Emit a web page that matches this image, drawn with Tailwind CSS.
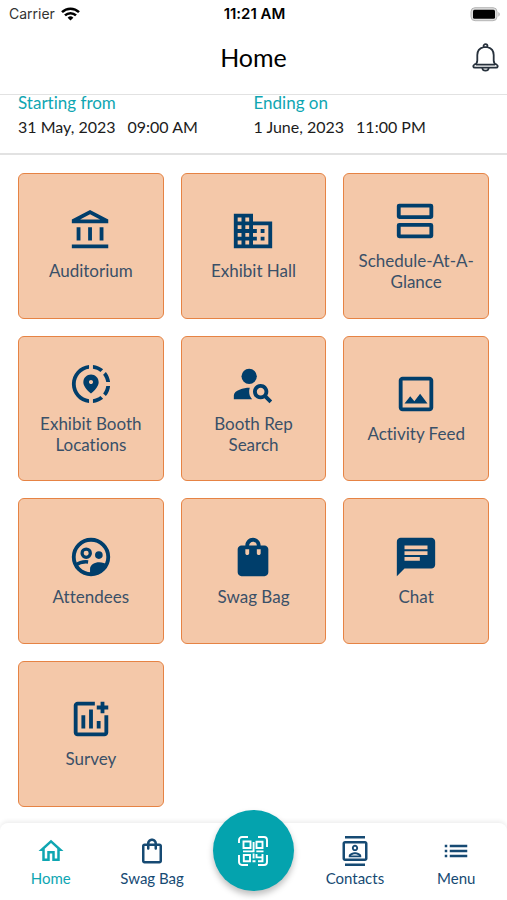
<!DOCTYPE html>
<html lang="en">
<head>
  <meta charset="UTF-8">
  <meta name="viewport" content="width=device-width, initial-scale=1.0">
  <title>Home</title>
  <script src="https://cdn.jsdelivr.net/npm/@tailwindcss/browser@4"></script>
</head>
<body class="min-h-screen flex flex-col bg-white text-[#1c1c1c] font-['Lato',sans-serif] [font-variant-ligatures:none]">

  <!-- Status bar -->
  <div class="grid grid-cols-3 items-center h-7 pl-[9px] pr-[7px] font-['Inter',sans-serif] text-sm">
    <div class="flex items-center gap-[6px] text-[#333]">
      <span>Carrier</span>
      <svg class="w-[19px] h-[14px]" viewBox="0 0 19 14" fill="none" stroke="#000" stroke-width="2.5">
        <path d="M1 5.2a12.2 12.2 0 0 1 17 0"/>
        <path d="M4 8.4a7.8 7.8 0 0 1 11 0"/>
        <path d="M9.5 13.6 6.6 10.7a4.1 4.1 0 0 1 5.8 0z" fill="#000" stroke="none"/>
      </svg>
    </div>
    <div class="text-center text-[15px] font-semibold text-black">11:21 AM</div>
    <svg class="justify-self-end w-[30px] h-[15px]" viewBox="0 0 30 15">
      <rect x="1" y="0.7" width="26" height="13" rx="4" fill="#ddd" stroke="#b5b5b5"/>
      <rect x="3" y="2.700" width="22" height="9" rx="1.500" fill="#000"/>
      <path d="M28.300 5c2 .8 2 3.800 0 4.600z" fill="#b5b5b5"/>
    </svg>
  </div>

  <!-- Header -->
  <header class="grid grid-cols-[1fr_auto_1fr] items-center h-[67px] pb-2 px-2 border-b border-[#e2e2e2]">
    <h1 class="col-start-2 text-[25px] leading-8 text-black">Home</h1>
    <button class="justify-self-end" aria-label="Notifications">
      <svg class="w-[27px] h-[30px]" viewBox="0 0 27 30" fill="none" stroke="#27313c" stroke-width="1.800" stroke-linejoin="round">
        <path d="M11.500 5.200V4.200a2 2 0 0 1 4 0v1c3.800 1 6.200 3.900 6.200 7.900v5.400c0 2.400 1 3.500 3 4.200 1.600.8 1.300 3-.6 3H2.900c-1.900 0-2.200-2.200-.6-3 2-.7 3-1.800 3-4.200v-5.400c0-4 2.400-6.900 6.200-7.900z"/>
        <path d="M11.200 5.200h4.600M10.300 26c.4 3.600 6 3.600 6.400 0M4 22.700h19"/>
      </svg>
    </button>
  </header>

  <!-- Event dates -->
  <section class="grid grid-cols-2 h-[60px] px-[18px] border-b-2 border-[#e2e2e2] text-base leading-6">
    <div class="-mt-1">
      <h2 class="text-[17px] leading-6 text-[#0fa6b2]">Starting from</h2>
      <p class="flex gap-3"><span>31 May, 2023</span><span>09:00 AM</span></p>
    </div>
    <div class="-mt-1">
      <h2 class="text-[17px] leading-6 text-[#0fa6b2]">Ending on</h2>
      <p class="flex gap-3"><span>1 June, 2023</span><span>11:00 PM</span></p>
    </div>
  </section>

  <!-- Tiles -->
  <main class="flex-1 grid grid-cols-3 content-start gap-[17px] px-[18px] pt-[18px] pb-4 text-[17px] leading-[21px] text-center text-[#3a5068]">
    <a href="#" class="aspect-square flex flex-col items-center justify-center gap-[6px] pb-[2px] px-2 rounded-md border border-[#e68344] bg-[#f4c8a9]">
      <svg class="w-[46px] h-[46px] fill-[#003e6b]" viewBox="0 0 24 24"><path d="M6.500 10h-2v7h2v-7zm6 0h-2v7h2v-7zm8.500 9H2v2h19v-2zm-2.500-9h-2v7h2v-7zm-7-6.740L16.710 6H6.290l5.210-2.740m0-2.260L2 6v2h19V6l-9.500-5z"/></svg>
      <span>Auditorium</span>
    </a>
    <a href="#" class="aspect-square flex flex-col items-center justify-center gap-[6px] pb-[2px] px-2 rounded-md border border-[#e68344] bg-[#f4c8a9]">
      <svg class="w-[46px] h-[46px] fill-[#003e6b]" viewBox="0 0 24 24"><path d="M12 7V3H2v18h20V7H12zM6 19H4v-2h2v2zm0-4H4v-2h2v2zm0-4H4V9h2v2zm0-4H4V5h2v2zm4 12H8v-2h2v2zm0-4H8v-2h2v2zm0-4H8V9h2v2zm0-4H8V5h2v2zm10 12h-8v-2h2v-2h-2v-2h2v-2h-2V9h8v10zm-2-8h-2v2h2v-2zm0 4h-2v2h2v-2z"/></svg>
      <span>Exhibit Hall</span>
    </a>
    <a href="#" class="aspect-square flex flex-col items-center justify-center gap-[6px] pb-[2px] px-2 rounded-md border border-[#e68344] bg-[#f4c8a9]">
      <svg class="w-[46px] h-[46px] fill-none stroke-[#003e6b]" viewBox="0 0 24 24" stroke-width="2"><rect x="3" y="4" width="17" height="6" rx="0.300"/><rect x="3" y="14" width="17" height="6" rx="0.300"/></svg>
      <span>Schedule-At-A-Glance</span>
    </a>
    <a href="#" class="aspect-square flex flex-col items-center justify-center gap-[6px] pb-[2px] px-2 rounded-md border border-[#e68344] bg-[#f4c8a9]">
      <svg class="w-[46px] h-[46px] fill-[#003e6b]" viewBox="0 0 24 24"><path d="M13.020 19.930v2.020c2.010-.2 3.840-1 5.320-2.210l-1.420-1.430c-1.110.86-2.440 1.440-3.900 1.620zM4.030 12c0-4.050 3.030-7.410 6.950-7.930V2.050C5.950 2.580 2.030 6.840 2.030 12s3.920 9.420 8.950 9.950v-2.020c-3.920-.52-6.950-3.880-6.950-7.930zm15.920-1h2.020c-.2-2.010-1-3.840-2.210-5.320l-1.430 1.430c.86 1.100 1.440 2.430 1.620 3.890zm-1.610-6.740c-1.480-1.210-3.320-2.010-5.320-2.210v2.020c1.460.18 2.790.76 3.900 1.620l1.420-1.430zm-.01 12.640l1.430 1.420c1.210-1.480 2.010-3.310 2.210-5.320h-2.020c-.18 1.460-.76 2.790-1.620 3.900zM16 11.100C16 8.610 14.100 7 12 7s-4 1.610-4 4.100c0 1.660 1.330 3.630 4 5.900 2.670-2.270 4-4.240 4-5.900zm-4 .9c-.59 0-1.070-.48-1.070-1.070s.48-1.070 1.070-1.070 1.070.48 1.070 1.070S12.590 12 12 12z"/></svg>
      <span>Exhibit Booth Locations</span>
    </a>
    <a href="#" class="aspect-square flex flex-col items-center justify-center gap-[6px] pb-[2px] px-6 rounded-md border border-[#e68344] bg-[#f4c8a9]">
      <svg class="w-[46px] h-[46px] fill-[#003e6b]" viewBox="0 0 24 24"><circle cx="10" cy="8" r="4"/><path d="M10.350 14.010C7.620 13.910 2 15.270 2 18v2h9.540c-2.470-2.760-1.230-5.890-1.190-5.990zM19.430 18.020c.36-.59.57-1.280.57-2.020 0-2.210-1.790-4-4-4s-4 1.790-4 4 1.790 4 4 4c.74 0 1.430-.22 2.020-.57L20.590 22 22 20.590l-2.570-2.570zM16 18c-1.100 0-2-.9-2-2s.9-2 2-2 2 .9 2 2-.9 2-2 2z"/></svg>
      <span>Booth Rep Search</span>
    </a>
    <a href="#" class="aspect-square flex flex-col items-center justify-center gap-[6px] pb-[2px] px-2 rounded-md border border-[#e68344] bg-[#f4c8a9]">
      <svg class="w-[46px] h-[46px] fill-[#003e6b]" viewBox="0 0 24 24"><path d="M19 5v14H5V5h14m0-2H5c-1.100 0-2 .9-2 2v14c0 1.100.9 2 2 2h14c1.100 0 2-.9 2-2V5c0-1.100-.9-2-2-2zm-4.860 8.860l-3 3.870L9 13.140 6 17h12l-3.860-5.140z"/></svg>
      <span>Activity Feed</span>
    </a>
    <a href="#" class="aspect-square flex flex-col items-center justify-center gap-[6px] pb-[2px] px-2 rounded-md border border-[#e68344] bg-[#f4c8a9]">
      <svg class="w-[46px] h-[46px] fill-[#003e6b]" viewBox="0 0 24 24">
        <g fill="none" stroke="#003e6b"><circle cx="12" cy="12" r="9" stroke-width="2"/><circle cx="9.500" cy="10" r="2.150" stroke-width="1.700"/><path d="M3.800 16.400c1.900-1.400 4.200-2.100 6.700-1.800" stroke-width="1.800"/></g>
        <circle cx="16.100" cy="11" r="2"/>
        <path d="M11.500 21.400v-3.200c0-2.100 2.400-3.500 4.800-3.500 1.600 0 3.200.5 4.300 1.300-1.500 3.500-4.700 5.700-9.100 5.400z"/>
      </svg>
      <span>Attendees</span>
    </a>
    <a href="#" class="aspect-square flex flex-col items-center justify-center gap-[6px] pb-[2px] px-2 rounded-md border border-[#e68344] bg-[#f4c8a9]">
      <svg class="w-[46px] h-[46px] fill-[#003e6b]" viewBox="0 0 24 24"><path d="M18 6h-2c0-2.210-1.790-4-4-4S8 3.790 8 6H6c-1.100 0-2 .9-2 2v12c0 1.100.9 2 2 2h12c1.100 0 2-.9 2-2V8c0-1.100-.9-2-2-2zm-8 4c0 .55-.45 1-1 1s-1-.45-1-1V8h2v2zm2-6c1.100 0 2 .9 2 2h-4c0-1.100.9-2 2-2zm4 6c0 .55-.45 1-1 1s-1-.45-1-1V8h2v2z"/></svg>
      <span>Swag Bag</span>
    </a>
    <a href="#" class="aspect-square flex flex-col items-center justify-center gap-[6px] pb-[2px] px-2 rounded-md border border-[#e68344] bg-[#f4c8a9]">
      <svg class="w-[46px] h-[46px] fill-[#003e6b]" viewBox="0 0 24 24"><path d="M20 2H4c-1.100 0-1.990.9-1.990 2L2 22l4-4h14c1.100 0 2-.9 2-2V4c0-1.100-.9-2-2-2zM6 9h12v2H6V9zm8 5H6v-2h8v2zm4-6H6V6h12v2z"/></svg>
      <span>Chat</span>
    </a>
    <a href="#" class="aspect-square flex flex-col items-center justify-center gap-[6px] pb-[2px] px-2 rounded-md border border-[#e68344] bg-[#f4c8a9]">
      <svg class="w-[46px] h-[46px] fill-[#003e6b]" viewBox="0 0 24 24"><path d="M14 3H5c-1.100 0-2 .9-2 2v14c0 1.100.9 2 2 2h14c1.100 0 2-.9 2-2v-9h-2v9H5V5h9V3zM7 10h2v7H7zM11 7h2v10h-2zM15 13h2v4h-2zM17 3h2v2h2v2h-2v2h-2V7h-2V5h2z"/></svg>
      <span>Survey</span>
    </a>
  </main>

  <!-- Bottom navigation -->
  <nav class="sticky bottom-0 grid grid-cols-5 h-[77px] rounded-t-lg bg-white shadow-[0_-2px_4px_rgba(0,0,0,0.07)] text-[15px] leading-5 text-[#164a73]">
    <a href="#" class="flex flex-col items-center gap-[2px] pt-[13px] text-[#0fa6b2]">
      <svg class="w-[30px] h-[30px]" viewBox="0 0 24 24" fill="currentColor"><path d="M12 5.690l5 4.500V18h-2v-6H9v6H7v-7.810l5-4.500M12 3L2 12h3v8h6v-6h2v6h6v-8h3L12 3z"/></svg>
      <span>Home</span>
    </a>
    <a href="#" class="flex flex-col items-center gap-[2px] pt-[13px]">
      <svg class="w-[30px] h-[30px]" viewBox="0 0 24 24" fill="currentColor"><path d="M18 6h-2c0-2.210-1.790-4-4-4S8 3.790 8 6H6c-1.100 0-2 .9-2 2v12c0 1.100.9 2 2 2h12c1.100 0 2-.9 2-2V8c0-1.100-.9-2-2-2zm-6-2c1.100 0 2 .9 2 2h-4c0-1.100.9-2 2-2zm6 16H6V8h2v2c0 .55.45 1 1 1s1-.45 1-1V8h4v2c0 .55.45 1 1 1s1-.45 1-1V8h2v12z"/></svg>
      <span>Swag Bag</span>
    </a>
    <button aria-label="Scan QR code" class="justify-self-center -mt-[13px] w-[81px] h-[81px] flex items-center justify-center rounded-full bg-[#04a3ae] shadow-[0_4px_6px_rgba(0,0,0,0.25)]">
      <svg class="w-[30px] h-[30px]" viewBox="0 0 30 30" fill="none" stroke="#fff" stroke-width="1.900">
        <path d="M1 7V4a3 3 0 0 1 3-3h6M20 1h6a3 3 0 0 1 3 3v7M29 19v7a3 3 0 0 1-3 3h-6M10 29H4a3 3 0 0 1-3-3v-7"/>
        <path d="M5.500 5.500h7v6.500h-7zM18.500 5.800h6v6.200h-6zM5.800 19h6.200v6.200H5.800z"/>
        <path d="M15.600 6v9.400H5M18.300 15.400h7.200M15.600 17.500v5M14.500 25.200h3M18.500 18v3.400h6V18M20 25.200h4.500v-3.800"/>
      </svg>
    </button>
    <a href="#" class="flex flex-col items-center gap-[2px] pt-[13px]">
      <svg class="w-[30px] h-[30px]" viewBox="0 0 24 24" fill="currentColor"><path d="M20 4H4c-1.100 0-2 .9-2 2v12c0 1.100.9 2 2 2h16c1.100 0 2-.9 2-2V6c0-1.100-.9-2-2-2zm0 14H4V6h16v12zM4 0h16v2H4zm0 22h16v2H4zm8-10c1.380 0 2.500-1.120 2.500-2.500S13.380 7 12 7 9.500 8.120 9.500 9.500 10.620 12 12 12zm0-3.500c.55 0 1 .45 1 1s-.45 1-1 1-1-.45-1-1 .45-1 1-1zm5 7.490C17 13.900 13.690 13 12 13s-5 .9-5 2.990V17h10v-1.010zm-8.190-.49c.61-.52 2.030-1 3.190-1 1.170 0 2.590.48 3.200 1H8.810z"/></svg>
      <span>Contacts</span>
    </a>
    <a href="#" class="flex flex-col items-center gap-[2px] pt-[13px]">
      <svg class="w-[30px] h-[30px]" viewBox="0 0 24 24" fill="currentColor"><path d="M3 13h2v-2H3v2zm0 4h2v-2H3v2zm0-8h2V7H3v2zm4 4h14v-2H7v2zm0 4h14v-2H7v2zM7 7v2h14V7H7z"/></svg>
      <span>Menu</span>
    </a>
  </nav>

</body>
</html>
